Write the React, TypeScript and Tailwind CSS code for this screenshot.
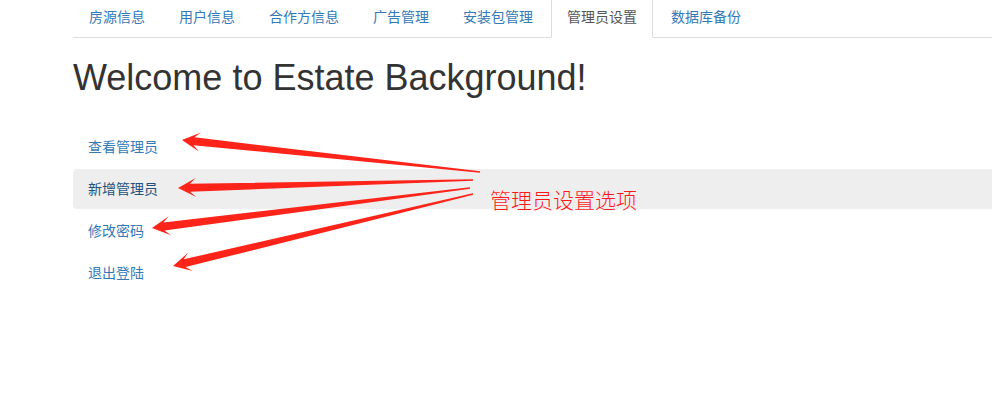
import React from 'react';

const tabs = ['房源信息', '用户信息', '合作方信息', '广告管理', '安装包管理', '管理员设置', '数据库备份'];
const activeTab = '管理员设置';

const pills = ['查看管理员', '新增管理员', '修改密码', '退出登陆'];
const activePill = '新增管理员';

type Pt = [number, number];

// tapered annotation arrow: thin at tail, barbed head at tip
function arrowPoints(tail: Pt, tip: Pt) {
    const dx = tail[0] - tip[0];
    const dy = tail[1] - tip[1];
    const len = Math.hypot(dx, dy);
    const ux = dx / len;
    const uy = dy / len;
    const px = -uy;
    const py = ux;
    const at = (d: number, w: number): string =>
        `${(tip[0] + ux * d + px * w).toFixed(1)},${(tip[1] + uy * d + py * w).toFixed(1)}`;
    return [
        at(0, 0),
        at(18, 9.5),
        at(12, 4),
        at(len, 0.7),
        at(len, -0.7),
        at(12, -4),
        at(18, -9.5),
    ].join(' ');
}

const arrows: { tail: Pt; tip: Pt }[] = [
    { tail: [480, 172], tip: [182, 140] },
    { tail: [473, 180], tip: [178, 188] },
    { tail: [470, 188], tip: [152, 228] },
    { tail: [473, 194], tip: [173, 266] },
];

export default function App() {
    return (
        <div className="relative h-[401px] w-[992px] overflow-hidden bg-white text-[14px] leading-[20px] text-[#333] font-['Liberation_Sans','Noto_Sans_CJK_SC',sans-serif]">
            <div className="ml-[73px] w-[940px]">
                <ul className="-mt-1 flex border-b border-[#ddd]">
                    {tabs.map((tab) => (
                        <li key={tab} className="-mb-px mr-[2px]">
                            <a
                                href="#"
                                className={
                                    tab === activeTab
                                        ? 'block rounded-t border border-[#ddd] border-b-transparent bg-white px-[15px] py-[10px] text-[#555]'
                                        : 'block rounded-t border border-transparent px-[15px] py-[10px] text-[#337ab7]'
                                }
                            >
                                {tab}
                            </a>
                        </li>
                    ))}
                </ul>
                <h1 className="mt-5 mb-[29px] text-[36px] font-normal leading-[1.1] text-[#333]">
                    Welcome to Estate Background!
                </h1>
                <ul className="flex flex-col gap-[2px]">
                    {pills.map((pill) => (
                        <li key={pill}>
                            <a
                                href="#"
                                className={
                                    pill === activePill
                                        ? 'block rounded bg-[#eee] px-[15px] py-[10px] text-[#23527c]'
                                        : 'block rounded px-[15px] py-[10px] text-[#337ab7]'
                                }
                            >
                                {pill}
                            </a>
                        </li>
                    ))}
                </ul>
            </div>

            <svg className="pointer-events-none absolute inset-0" width="992" height="401" viewBox="0 0 992 401">
                {arrows.map((a, i) => (
                    <polygon key={i} points={arrowPoints(a.tail, a.tip)} fill="#fe2419" />
                ))}
            </svg>
            <span className="absolute left-[490px] top-[189px] text-[21px] font-light leading-[21px] text-[#ff1a1a] font-['Noto_Sans_CJK_SC',sans-serif]">
                管理员设置选项
            </span>
        </div>
    );
}
